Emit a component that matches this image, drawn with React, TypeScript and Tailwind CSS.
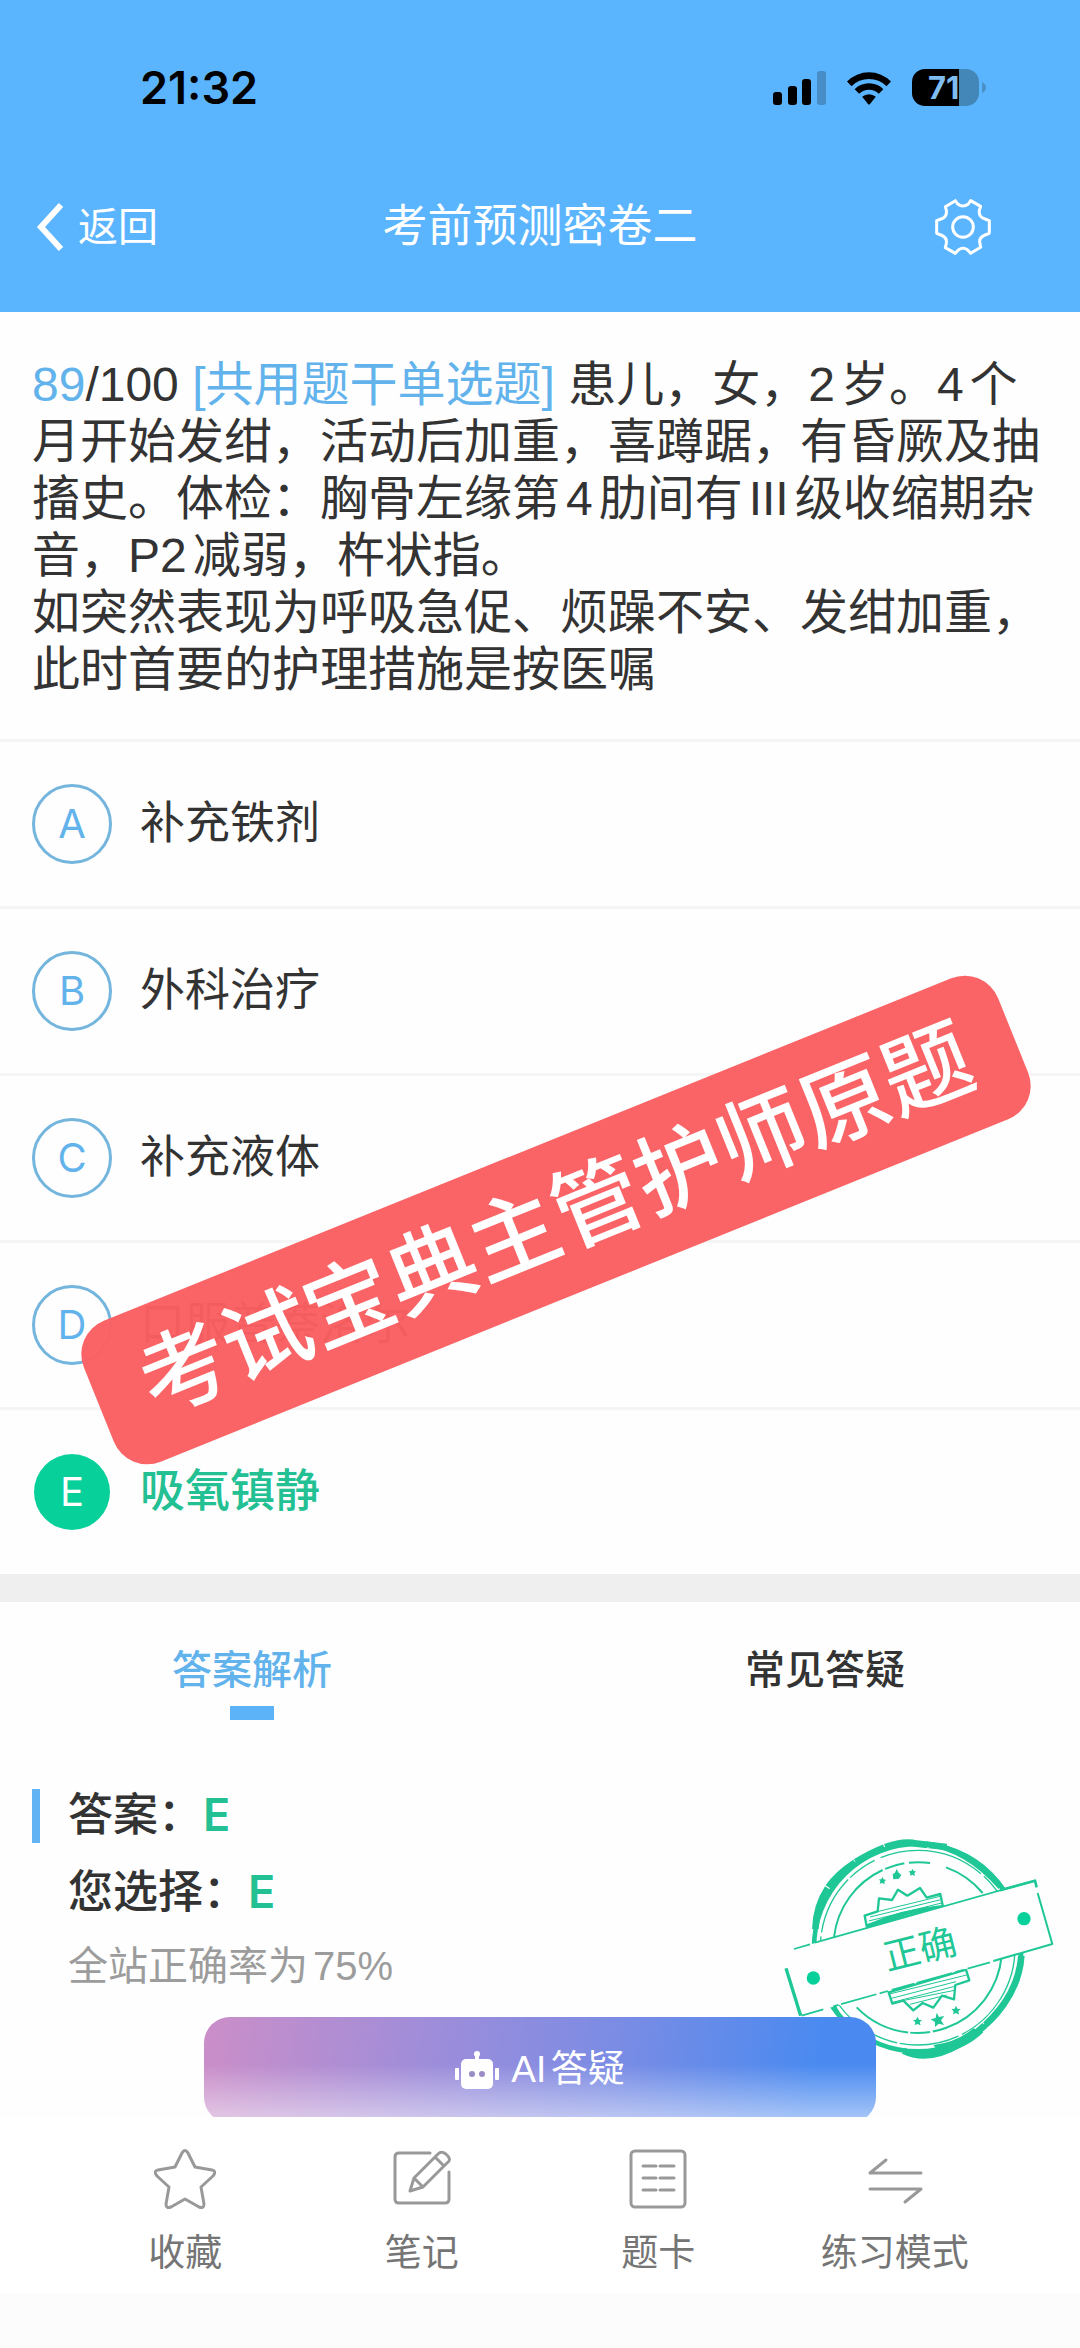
import { useState } from "react";
import clsx from "clsx";

interface OptionItem {
  key: string;
  label: string;
}

const OPTIONS: OptionItem[] = [
  { key: "A", label: "补充铁剂" },
  { key: "B", label: "外科治疗" },
  { key: "C", label: "补充液体" },
  { key: "D", label: "口服普萘洛尔" },
  { key: "E", label: "吸氧镇静" },
];
const CORRECT_KEY = "E";

const TABS = [
  { id: "analysis", label: "答案解析" },
  { id: "faq", label: "常见答疑" },
];

function StatusBar() {
  return (
    <div className="flex h-44 items-center justify-between pr-[94px] pl-[140px] font-['Inter',sans-serif]">
      <span className="text-[45px] font-semibold text-black">21:32</span>
      <div className="flex items-center gap-5">
        <svg width="53" height="34" viewBox="0 0 53 34" aria-hidden="true">
          <rect x="0" y="21" width="9" height="13" rx="3" />
          <rect x="15" y="15" width="9" height="19" rx="3" />
          <rect x="29" y="8" width="9" height="26" rx="3" />
          <rect x="44" y="0" width="9" height="34" rx="3" fillOpacity="0.22" />
        </svg>
        <svg width="46" height="34" viewBox="0 0 46 34" aria-hidden="true">
          <path d="M1 10.500A31 31 0 0 1 45 10.500L40.500 15.200A24.700 24.700 0 0 0 5.500 15.200Z" />
          <path d="M8.600 18.200A20.500 20.500 0 0 1 37.400 18.200L32.800 22.800A14 14 0 0 0 13.200 22.800Z" />
          <path d="M16.200 25.800A10 10 0 0 1 29.800 25.800L24 33Q23 34 22 33Z" />
        </svg>
        <svg width="74" height="38" viewBox="0 0 74 38" aria-hidden="true">
          <path d="M13 0H47V37H13A13 13 0 0 1 0 24V13A13 13 0 0 1 13 0Z" />
          <path d="M47 0H54A13 13 0 0 1 67 13V24A13 13 0 0 1 54 37H47Z" fill="#4287b7" />
          <path d="M70 13Q74 15 74 18.500T70 24Z" fill="#4a92c6" />
          <text x="16" y="30" fontSize="31" fontWeight="700" fill="#7fbdf0">
            71
          </text>
        </svg>
      </div>
    </div>
  );
}

function Header() {
  return (
    <header className="shrink-0 bg-[#5bb5fe] pb-[34px]">
      <StatusBar />
      <div className="grid h-[102px] grid-cols-[1fr_auto_1fr] items-center text-white">
        <button type="button" className="flex items-center gap-3.5 justify-self-start pl-9 text-[40px]">
          <svg width="28" height="48" viewBox="0 0 28 48" fill="none" stroke="currentColor" strokeWidth="6" aria-hidden="true">
            <path d="M25 2L5 24L25 46" />
          </svg>
          返回
        </button>
        <h1 className="text-[45px]">考前预测密卷二</h1>
        <button type="button" aria-label="设置" className="justify-self-end pr-[89px]">
          <svg width="56" height="56" viewBox="0 0 168 168" fill="none" stroke="currentColor" strokeWidth="9" strokeLinejoin="round" aria-hidden="true">
            <path d="M61 5L68 15Q84 27 100 15L107 5L137 22L133 34Q130 54 150 60L163 65V103L150 108Q130 116 135 134L137 145L107 163L98 153Q84 143 70 153L61 163L31 146L34 133Q37 115 18 108L5 103V65L18 60Q37 54 34 34L31 23Z" />
            <circle cx="84" cy="84" r="31" />
          </svg>
        </button>
      </div>
    </header>
  );
}

function Question() {
  return (
    <section className="px-8 pt-11 pb-[41px] text-[48px] leading-[57px] text-[#333]">
      <p>
        <span className="text-[#62b3ec]">89</span>/100 <span className="text-[#62b3ec]">[共用题干单选题]</span>{" "}
        患儿，女，2岁。4个月开始发绀，活动后加重，喜蹲踞，有昏厥及抽搐史。体检：胸骨左缘第4肋间有III级收缩期杂音，P2减弱，杵状指。
      </p>
      <p>如突然表现为呼吸急促、烦躁不安、发绀加重，此时首要的护理措施是按医嘱</p>
    </section>
  );
}

function OptionRow({ option, correct }: { option: OptionItem; correct: boolean }) {
  return (
    <button
      type="button"
      className={clsx(
        "flex h-[167px] w-full items-center gap-7 border-t-3 border-[#f5f5f5] px-8 text-left text-[45px]",
        correct ? "font-medium text-[#22c093]" : "text-[#333]"
      )}
    >
      <span className="flex size-20 shrink-0 items-center justify-center">
        <span
          className={clsx(
            "flex items-center justify-center rounded-full font-['Inter',sans-serif] text-[40px] font-normal",
            correct ? "size-[76px] bg-[#08d09b] text-white" : "size-20 border-3 border-[#74b5dd] text-[#62b3ec]"
          )}
        >
          {option.key}
        </span>
      </span>
      {option.label}
    </button>
  );
}

// Round "正确" seal with a tilted ribbon across it
function CorrectStamp() {
  return (
    <svg
      className="absolute top-[42px] right-0"
      width="320"
      height="260"
      viewBox="0 0 960 780"
      fill="none"
      stroke="#1fc796"
      strokeLinejoin="round"
      role="img"
      aria-label="正确"
    >
      <circle cx="473" cy="386" r="311" strokeWidth="14" />
      <path d="M166 330Q168 260 205 205T330 105T470 74L560 84" strokeWidth="20" strokeDasharray="130 3 110 2 96 3" />
      <path d="M500 75Q620 88 722 205" strokeWidth="16" />
      <path d="M784 410Q775 540 650 640T430 695" strokeWidth="20" strokeDasharray="240 3 90 4" />
      <path d="M640 628Q590 670 520 678L540 704Q620 690 670 640Z" fill="#1fc796" stroke="none" />
      <circle cx="473" cy="386" r="292" strokeWidth="4" strokeDasharray="320 12 180 8 90 20" />
      <path d="M222 355A254 254 0 0 1 510 132" strokeWidth="6" strokeDasharray="260 8 60 14" />
      <path d="M558 145A254 254 0 0 1 668 222" strokeWidth="6" />
      <path d="M725 410A254 254 0 0 1 290 565" strokeWidth="6" strokeDasharray="330 8 60 6" />

      <path d="M320 322L314 290L353 277L357 238L396 243L414 212L442 230L480 207L500 236L541 225L549 264Z" strokeWidth="7" />
      <path d="M352 278L540 232M330 294L542 242M326 306L545 252M323 316L440 286" strokeWidth="3" />
      <path d="M322 322Q430 274 548 264" strokeWidth="12" />
      <path d="M386 520L397 554L430 545L460 574L488 552L520 566L546 530L582 541L586 498L628 484L618 452Z" strokeWidth="7" />
      <path d="M388 525L620 468M394 538L588 488M398 550L584 502M428 545L584 514M450 556L560 528" strokeWidth="3" />

      <g fill="#1fc796" stroke="none">
        <path d="M410 150L416 161L424 168L417 179L400 181L398 166L405 161Z" />
        <path d="M367 174L371 181L378 183L373 188L374 196L367 192L359 194L361 187L357 181L364 181Z" />
        <path d="M457 149L461 156L468 157L463 163L465 171L457 167L450 170L451 163L446 157L454 156Z" />
        <path d="M530 581L537 594L553 591L543 604L552 618L536 614L525 624L525 609L512 601L527 597Z" />
        <path d="M472 593L477 602L486 603L479 610L482 619L472 615L464 619L466 610L459 603L468 602Z" />
        <path d="M588 560L592 569L602 570L595 577L597 587L588 582L579 586L581 577L574 570L584 569Z" />
      </g>

      <path d="M100 391L825 185L877 375L125 590L78 445Z" fill="#fefefe" stroke="none" />
      <path d="M102 390L150 376M165 371L825 185" strokeWidth="5" />
      <path d="M720 214L825 185L830 205" strokeWidth="8" />
      <path d="M833 222L877 375L700 426" strokeWidth="6" />
      <path d="M690 430L220 562M190 571L125 590" strokeWidth="5" strokeDasharray="70 12 26 10 110 8" />
      <path d="M78 448L122 590" strokeWidth="10" />
      <path d="M222 562L240 594" strokeWidth="12" />
      <circle cx="160" cy="477" r="20" fill="#08d09b" stroke="none" />
      <circle cx="792" cy="299" r="20" fill="#08d09b" stroke="none" />
      <text x="479" y="430" fontSize="110" textAnchor="middle" transform="rotate(-14 479 390)" fill="#1fc796" stroke="none">
        正确
      </text>
    </svg>
  );
}

function RobotIcon() {
  return (
    <svg width="44" height="38" viewBox="0 0 44 38" fill="white" aria-hidden="true">
      <rect x="20" y="2" width="4" height="8" />
      <circle cx="22" cy="3" r="3" />
      <rect x="6" y="8" width="32" height="30" rx="5" />
      <rect x="0" y="17" width="4" height="12" rx="1" />
      <rect x="40" y="17" width="4" height="12" rx="1" />
      <circle cx="17" cy="23" r="3" fill="#9a8cc4" />
      <circle cx="27" cy="23" r="3" fill="#9a8cc4" />
    </svg>
  );
}

function Analysis() {
  const [tab, setTab] = useState("analysis");

  return (
    <section className="border-t-28 border-[#efefef]">
      <div role="tablist" className="flex justify-between pt-[38px] pr-[175px] pl-[172px]">
        {TABS.map((t) => (
          <button
            key={t.id}
            type="button"
            role="tab"
            aria-selected={tab === t.id}
            onClick={() => setTab(t.id)}
            className={clsx("flex flex-col items-center gap-1.5 text-[40px] leading-[60px] font-medium", tab === t.id ? "text-[#62b3ec]" : "text-[#333]")}
          >
            {t.label}
            <span className={clsx("h-3.5 w-11", tab === t.id && "bg-[#5cb3f8]")} />
          </button>
        ))}
      </div>

      <div className="relative mt-[57px]">
        <CorrectStamp />
        <div className="flex items-center gap-7 pl-8 text-[45px] leading-[76px] font-medium text-[#333]">
          <span className="h-[54px] w-2 bg-[#62b3f3]" />
          <p>
            答案：<span className="font-['Inter',sans-serif] font-semibold text-[#22c093]">E</span>
          </p>
        </div>
        <div className="pl-[68px]">
          <p className="text-[45px] leading-[76px] font-medium text-[#333]">
            您选择：<span className="font-['Inter',sans-serif] font-semibold text-[#22c093]">E</span>
          </p>
          <p className="text-[40px] leading-[70px] text-[#9c9c9c]">全站正确率为75%</p>
        </div>
        <button
          type="button"
          className="relative mx-auto mt-4 flex h-[106px] w-[672px] items-center justify-center gap-3 rounded-[26px] bg-[linear-gradient(to_top,rgba(255,255,255,0.55),rgba(255,255,255,0)_55%),linear-gradient(100deg,#cb8ec8,#a38dd8_30%,#7b8ce4_60%,#4a8af0_90%)] text-[37px] text-white"
        >
          <RobotIcon />
          AI答疑
        </button>
      </div>
    </section>
  );
}

const NAV_ITEMS = [
  {
    label: "收藏",
    icon: <path d="M27 4Q30 -1 33 4L40 18L57 21Q62 22 58 27L46 38L49 55Q49 60 44 58L30 50L16 58Q11 60 11 55L14 38L2 27Q-2 22 3 21L20 18Z" />,
  },
  {
    label: "笔记",
    icon: (
      <>
        <path d="M38 4H7Q3 4 3 8V50Q3 54 7 54H53Q57 54 57 50V23" />
        <path d="M18 42L22 29L46 5Q50 1 55 6T55 14L31 38ZM22 29L31 38M43 8L52 17" />
      </>
    ),
  },
  {
    label: "题卡",
    icon: (
      <>
        <rect x="3" y="2" width="54" height="56" rx="4" />
        <path d="M15 17H28M32 17H46M15 29H28M32 29H46M15 41H28M32 41H46" />
      </>
    ),
  },
  {
    label: "练习模式",
    icon: <path d="M21 11L5 24H56M5 40H56L40 53" />,
  },
];

function BottomNav() {
  return (
    <nav className="shrink-0 bg-white">
      <div className="grid h-44 grid-cols-4 px-[67px] pt-[31px]">
        {NAV_ITEMS.map((item) => (
          <button key={item.label} type="button" className="flex flex-col items-center gap-4 text-[37px] leading-[56px] text-[#757575]">
            <svg width="62" height="62" viewBox="-1 -1 62 62" fill="none" stroke="#999" strokeWidth="3" strokeLinecap="round" strokeLinejoin="round" aria-hidden="true">
              {item.icon}
            </svg>
            {item.label}
          </button>
        ))}
      </div>
      <div className="h-[55px] bg-[#fcfcfc]" />
    </nav>
  );
}

export default function App() {
  return (
    <div lang="zh-CN" className="flex h-screen flex-col bg-[#fefefe] font-['Liberation_Sans','Noto_Sans_CJK_SC',sans-serif] [text-autospace:normal]">
      <Header />
      <main className="min-h-0 flex-1 overflow-y-auto [scrollbar-width:none]">
        <Question />
        <section className="relative">
          {OPTIONS.map((o) => (
            <OptionRow key={o.key} option={o} correct={o.key === CORRECT_KEY} />
          ))}
          {/* promo sticker laid across the options */}
          <div className="pointer-events-none absolute inset-0 flex items-center justify-center pt-[126px] pl-8">
            <p className="shrink-0 -rotate-22 rounded-[36px] bg-[#fa5f61]/97 px-12 text-[89px] leading-[152px] font-medium whitespace-nowrap text-white">
              考试宝典主管护师原题
            </p>
          </div>
        </section>
        <Analysis />
      </main>
      <BottomNav />
    </div>
  );
}
